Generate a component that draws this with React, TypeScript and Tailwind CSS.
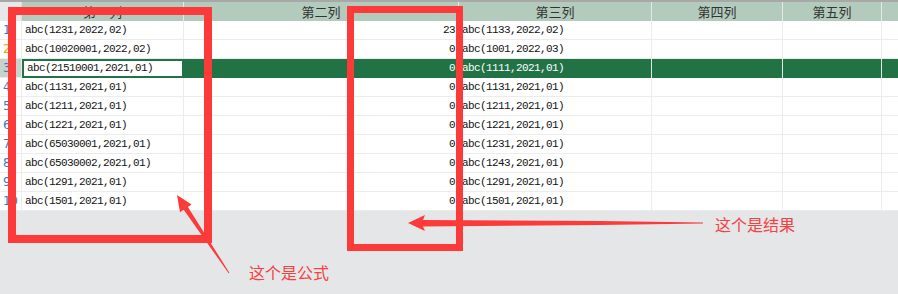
import React from "react";

const rows: [string, string, string][] = [
  ["abc(1231,2022,02)", "23", "abc(1133,2022,02)"],
  ["abc(10020001,2022,02)", "0", "abc(1001,2022,03)"],
  ["abc(21510001,2021,01)", "0", "abc(1111,2021,01)"],
  ["abc(1131,2021,01)", "0", "abc(1131,2021,01)"],
  ["abc(1211,2021,01)", "0", "abc(1211,2021,01)"],
  ["abc(1221,2021,01)", "0", "abc(1221,2021,01)"],
  ["abc(65030001,2021,01)", "0", "abc(1231,2021,01)"],
  ["abc(65030002,2021,01)", "0", "abc(1243,2021,01)"],
  ["abc(1291,2021,01)", "0", "abc(1291,2021,01)"],
  ["abc(1501,2021,01)", "0", "abc(1501,2021,01)"],
];

const mono = { fontFamily: '"Liberation Mono", monospace' };
const cjk = { fontFamily: '"Noto Sans CJK SC", "Noto Sans", sans-serif' };

export default function App() {
  return (
    <div className="relative w-[898px] h-[294px] overflow-hidden bg-[#e5e6e8]">
      <div className="border-t-2 border-[#a8a8a8] bg-white">
        {/* header */}
        <div
          className="grid grid-cols-[22px_162px_275px_193px_131px_99px_16px] h-[19px] bg-[#b3cbbd] text-[13px] leading-[19px] text-[#333]"
          style={cjk}
        >
          <div className="bg-[#e8e8e8] border-r border-[#dcdcdc]" />
          <div className="border-r border-[#e2ebe5] text-center">第一列</div>
          <div className="border-r border-[#e2ebe5] text-center">第二列</div>
          <div className="border-r border-[#e2ebe5] text-center">第三列</div>
          <div className="border-r border-[#e2ebe5] text-center">第四列</div>
          <div className="border-r border-[#e2ebe5] text-center">第五列</div>
          <div />
        </div>
        {rows.map((r, i) => {
          const sel = i === 2;
          const numColor = i === 1 ? "text-[#f0a000]" : "text-[#3a78b8]";
          const cell = sel
            ? "bg-[#217346] border-r border-[#e6e6e6]"
            : "border-r border-b border-[#ececec]";
          return (
            <div
              key={i}
              className="grid grid-cols-[22px_162px_275px_193px_131px_99px_16px] h-[19px] text-[11px] leading-[18px] text-[#111]"
              style={mono}
            >
              <div
                className={`border-r border-b border-[#ececec] pl-[3px] text-[12px] ${numColor} ${
                  sel ? "bg-[#c9d3cd]" : ""
                }`}
                style={{ fontFamily: '"DejaVu Sans", sans-serif', letterSpacing: "-0.5px" }}
              >
                {i + 1}
              </div>
              <div
                className={`pl-[3px] tracking-[-0.6px] whitespace-nowrap ${
                  sel ? "border-2 border-[#217346] leading-[15px]" : "border-r border-b border-[#ececec]"
                }`}
              >
                {r[0]}
              </div>
              <div className={`${cell} text-right pr-[3px] tracking-[-0.6px] ${sel ? "text-white" : ""}`}>
                {r[1]}
              </div>
              <div className={`${cell} pl-[3px] tracking-[-0.6px] whitespace-nowrap ${sel ? "text-white" : ""}`}>
                {r[2]}
              </div>
              <div className={cell} />
              <div className={cell} />
              <div className={sel ? "bg-[#217346]" : "border-b border-[#ececec]"} />
            </div>
          );
        })}
      </div>

      {/* annotations overlay */}
      <svg className="absolute left-0 top-0 pointer-events-none" width="898" height="294" viewBox="0 0 898 294">
        <rect x="12" y="11" width="196" height="228" fill="none" stroke="#fc3a3a" strokeWidth="8" />
        <rect x="350.5" y="9.5" width="109" height="238" fill="none" stroke="#fc3a3a" strokeWidth="7" />
        <polygon
          fill="#fc3a3a"
          points="177,195 191.6,204.4 187.9,206.9 229.4,272.7 228.6,273.3 183.7,209.7 180,212.2"
        />
        <polygon
          fill="#fc3a3a"
          points="408,223 425,215 423,220 600,221 703,222.5 703,223.5 600,225 423,226.5 425,231"
        />
      </svg>
      <div
        className="absolute left-[249px] top-[262px] text-[16px] leading-[20px] text-[#f5413f]"
        style={cjk}
      >
        这个是公式
      </div>
      <div
        className="absolute left-[715px] top-[214px] text-[16px] leading-[20px] text-[#f5413f]"
        style={cjk}
      >
        这个是结果
      </div>
    </div>
  );
}
